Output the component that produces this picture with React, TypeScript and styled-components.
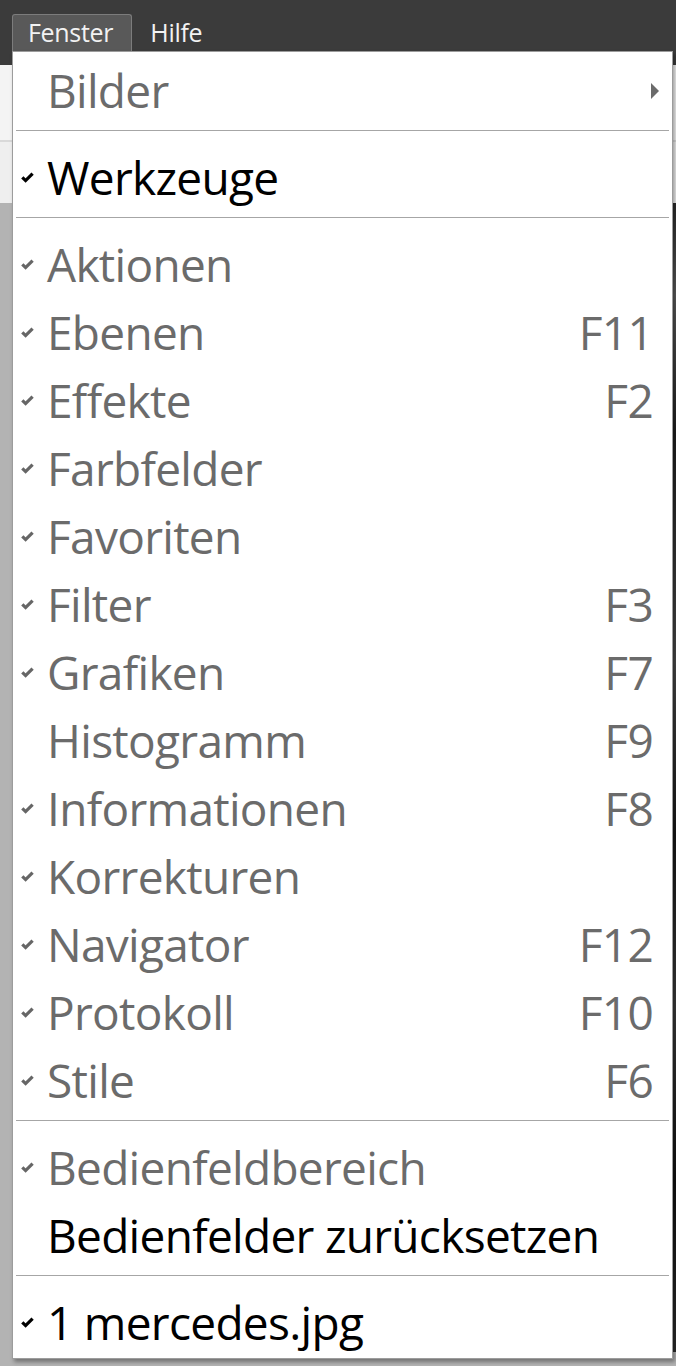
import styled, { createGlobalStyle } from 'styled-components';

const GlobalStyle = createGlobalStyle`
  html, body {
    margin: 0;
    padding: 0;
    overflow: hidden;
  }
`;

type Entry =
  | { kind: 'item'; label: string; checked?: boolean; active?: boolean; shortcut?: string; submenu?: boolean }
  | { kind: 'sep' };

const entries: Entry[] = [
  { kind: 'item', label: 'Bilder', submenu: true },
  { kind: 'sep' },
  { kind: 'item', label: 'Werkzeuge', checked: true, active: true },
  { kind: 'sep' },
  { kind: 'item', label: 'Aktionen', checked: true },
  { kind: 'item', label: 'Ebenen', checked: true, shortcut: 'F11' },
  { kind: 'item', label: 'Effekte', checked: true, shortcut: 'F2' },
  { kind: 'item', label: 'Farbfelder', checked: true },
  { kind: 'item', label: 'Favoriten', checked: true },
  { kind: 'item', label: 'Filter', checked: true, shortcut: 'F3' },
  { kind: 'item', label: 'Grafiken', checked: true, shortcut: 'F7' },
  { kind: 'item', label: 'Histogramm', shortcut: 'F9' },
  { kind: 'item', label: 'Informationen', checked: true, shortcut: 'F8' },
  { kind: 'item', label: 'Korrekturen', checked: true },
  { kind: 'item', label: 'Navigator', checked: true, shortcut: 'F12' },
  { kind: 'item', label: 'Protokoll', checked: true, shortcut: 'F10' },
  { kind: 'item', label: 'Stile', checked: true, shortcut: 'F6' },
  { kind: 'sep' },
  { kind: 'item', label: 'Bedienfeldbereich', checked: true },
  { kind: 'item', label: 'Bedienfelder zurücksetzen', active: true },
  { kind: 'sep' },
  { kind: 'item', label: '1 mercedes.jpg', checked: true, active: true },
];

function CheckMark({ active }: { active?: boolean }) {
  return (
    <svg width="13" height="11" viewBox="0 0 13 11">
      <path
        d="M1.3 5.4 L4.6 8.6 L11.6 1.6"
        fill="none"
        stroke={active ? '#000' : '#666'}
        strokeWidth="3.2"
      />
    </svg>
  );
}

export default function App() {
  return (
    <>
      <GlobalStyle />
      <Page>
        <TopBar>
          <MenuTitle $open>Fenster</MenuTitle>
          <MenuTitle>Hilfe</MenuTitle>
        </TopBar>
        <ToolBar />
        <OptionsBar />
        <Workspace>
          <Canvas />
        </Workspace>

        <Dropdown>
          {entries.map((e, i) =>
            e.kind === 'sep' ? (
              <Separator key={i} />
            ) : (
              <Item key={i} $active={e.active}>
                <CheckCell>{e.checked && <CheckMark active={e.active} />}</CheckCell>
                <Label>{e.label}</Label>
                {e.shortcut && <Shortcut>{e.shortcut}</Shortcut>}
                {e.submenu && <Arrow />}
              </Item>
            )
          )}
        </Dropdown>
      </Page>
    </>
  );
}

const Page = styled.div`
  position: relative;
  width: 676px;
  height: 1366px;
  display: flex;
  flex-direction: column;
  font-family: "Open Sans", "Noto Sans", sans-serif;
  overflow: hidden;
`;

const TopBar = styled.div`
  height: 65px;
  flex: none;
  background: #3b3b3b;
  display: flex;
  align-items: flex-start;
  padding: 14px 0 0 12px;
  box-sizing: border-box;
`;

const MenuTitle = styled.div<{ $open?: boolean }>`
  height: 38px;
  box-sizing: border-box;
  padding: 0 18px 3px ${p => (p.$open ? '15px' : '17px')};
  display: flex;
  align-items: center;
  font-size: 25px;
  letter-spacing: -0.3px;
  color: #f2f2f2;
  background: ${p => (p.$open ? '#595959' : 'transparent')};
  border: 1px solid ${p => (p.$open ? '#7c7c7c' : 'transparent')};
  border-bottom: none;
  border-radius: 3px 3px 0 0;
`;

const ToolBar = styled.div`
  height: 75px;
  flex: none;
  background: #f4f4f4;
  border-bottom: 2px solid #d9d9d9;
`;

const OptionsBar = styled.div`
  height: 61px;
  flex: none;
  background: #efefef;
`;

const Workspace = styled.div`
  flex: 1;
  background: #b3b3b3;
  display: flex;
  justify-content: flex-end;
  padding: 0 0 14px 0;
`;

const Canvas = styled.div`
  width: 40px;
  background: linear-gradient(
    180deg,
    #2a2a2a 0%,
    #5a5a5a 8%,
    #1e1e1e 20%,
    #474747 40%,
    #161616 55%,
    #3a3a3a 70%,
    #101010 85%,
    #2c2c2c 100%
  );
`;

const Dropdown = styled.div`
  position: absolute;
  top: 51px;
  left: 12px;
  width: 661px;
  box-sizing: border-box;
  background: #ffffff;
  border: 1px solid #9c9c9c;
  box-shadow: 2px 3px 4px rgba(0, 0, 0, 0.35);
  padding: 6px 0 0 0;
  display: flex;
  flex-direction: column;
`;

const Item = styled.div<{ $active?: boolean }>`
  height: 68px;
  box-sizing: border-box;
  display: flex;
  align-items: center;
  padding: 0 19px 5px 0;
  color: ${p => (p.$active ? '#000000' : '#6b6b6b')};
  font-size: 46px;
  letter-spacing: -0.7px;
  line-height: 60px;
`;

const CheckCell = styled.div`
  width: 34px;
  flex: none;
  display: flex;
  padding-left: 8px;
  box-sizing: border-box;
  margin-top: 1px;
`;

const Label = styled.span`
  flex: 1;
  white-space: nowrap;
`;

const Shortcut = styled.span`
  white-space: nowrap;
`;

const Arrow = styled.span`
  width: 0;
  height: 0;
  border-top: 8px solid transparent;
  border-bottom: 8px solid transparent;
  border-left: 8px solid #6b6b6b;
  margin-right: -6px;
  margin-top: 2px;
`;

const Separator = styled.div`
  height: 1px;
  margin: 4px 3px 14px;
  background: #a6a6a6;
  flex: none;
`;
